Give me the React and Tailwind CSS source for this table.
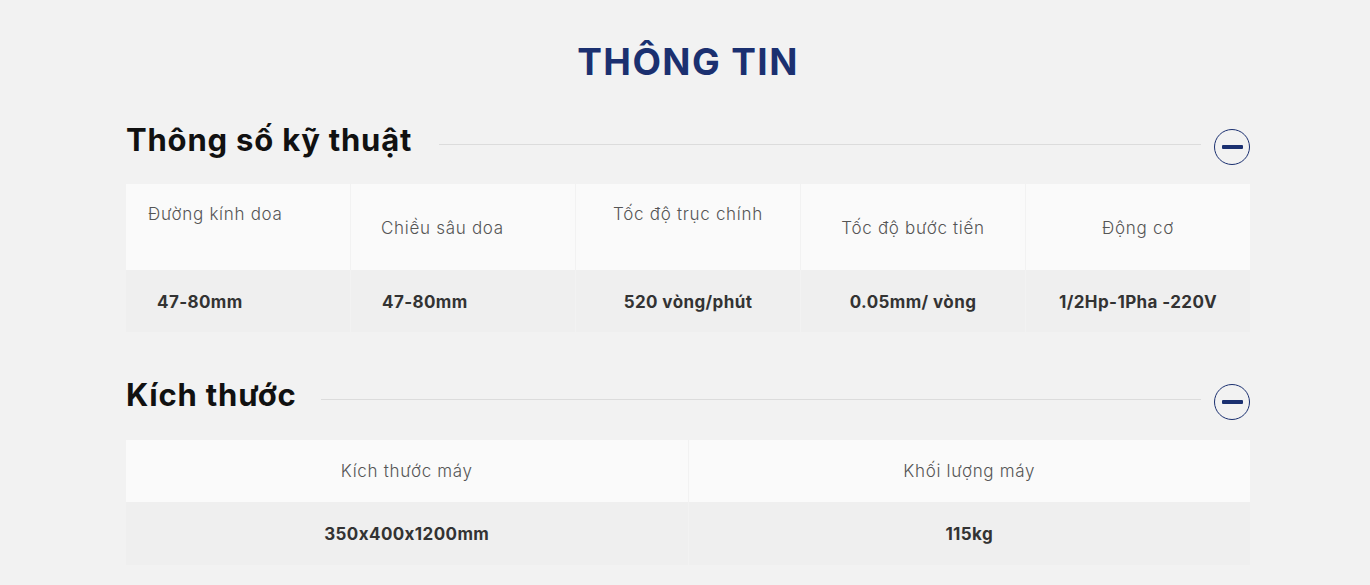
import React from "react";

const specs = [
  { label: "Đường kính doa", value: "47-80mm", head: "justify-start pl-[22px] pb-[24px]", body: "justify-start pl-[31px]" },
  { label: "Chiều sâu doa", value: "47-80mm", head: "justify-start pl-[30px] pt-[4px]", body: "justify-start pl-[31px]" },
  { label: "Tốc độ trục chính", value: "520 vòng/phút", head: "justify-center pb-[24px]", body: "justify-center" },
  { label: "Tốc độ bước tiến", value: "0.05mm/ vòng", head: "justify-center pt-[4px]", body: "justify-center" },
  { label: "Động cơ", value: "1/2Hp-1Pha -220V", head: "justify-center pt-[4px]", body: "justify-center" },
];

const sizes = [
  { label: "Kích thước máy", value: "350x400x1200mm" },
  { label: "Khối lượng máy", value: "115kg" },
];

const MinusButton = () => (
  <button className="w-9 h-9 shrink-0 rounded-full border border-[#1b3070] flex items-center justify-center">
    <span className="block w-[21px] h-[4px] rounded-[1px] bg-[#1b3070]" />
  </button>
);

const SectionHeader = ({ title, lineGap }) => (
  <div className="flex items-start">
    <h2 className="text-[31px] leading-[30px] tracking-[0.8px] font-bold text-[#111]">{title}</h2>
    <div className={`flex-1 h-px bg-[#dcdcdc] mt-[19px] mr-[13px] ${lineGap}`} />
    <div className="mt-[4px]">
      <MinusButton />
    </div>
  </div>
);

export default function App() {
  return (
    <div
      className="min-h-screen bg-[#f2f2f2] pt-[43px] pb-[20px] [font-feature-settings:'calt'_0]"
      style={{ fontFamily: "Inter, 'Noto Sans', sans-serif" }}
    >
      <div className="ml-[126px] w-[1124px]">
        <h1 className="text-center text-[37px] leading-none tracking-[1.4px] font-bold text-[#1b3070]">
          THÔNG TIN
        </h1>

        {/* Thông số kỹ thuật */}
        <div className="mt-[45px]">
          <SectionHeader title="Thông số kỹ thuật" lineGap="ml-[27px]" />
        </div>
        <div className="mt-[19px] grid grid-cols-5 gap-x-px">
          {specs.map((s) => (
            <div
              key={s.label}
              className={`h-[86px] bg-[#fafafa] flex items-center text-[17px] tracking-[0.7px] font-light text-[#555] ${s.head}`}
            >
              {s.label}
            </div>
          ))}
          {specs.map((s) => (
            <div
              key={s.label + "v"}
              className={`h-[62px] bg-[#efefef] flex items-center pt-[3px] text-[17px] tracking-[0.4px] font-bold text-[#333] ${s.body}`}
            >
              {s.value}
            </div>
          ))}
        </div>

        {/* Kích thước */}
        <div className="mt-[48px]">
          <SectionHeader title="Kích thước" lineGap="ml-[25px]" />
        </div>
        <div className="mt-[20px] grid grid-cols-2 gap-x-px">
          {sizes.map((s) => (
            <div
              key={s.label}
              className="h-[62px] bg-[#fafafa] flex items-center justify-center pt-[2px] text-[17px] tracking-[0.7px] font-light text-[#555]"
            >
              {s.label}
            </div>
          ))}
          {sizes.map((s) => (
            <div
              key={s.label + "v"}
              className="h-[63px] bg-[#efefef] flex items-center justify-center pt-[3px] text-[17px] tracking-[0.4px] font-bold text-[#333]"
            >
              {s.value}
            </div>
          ))}
        </div>
      </div>
    </div>
  );
}
